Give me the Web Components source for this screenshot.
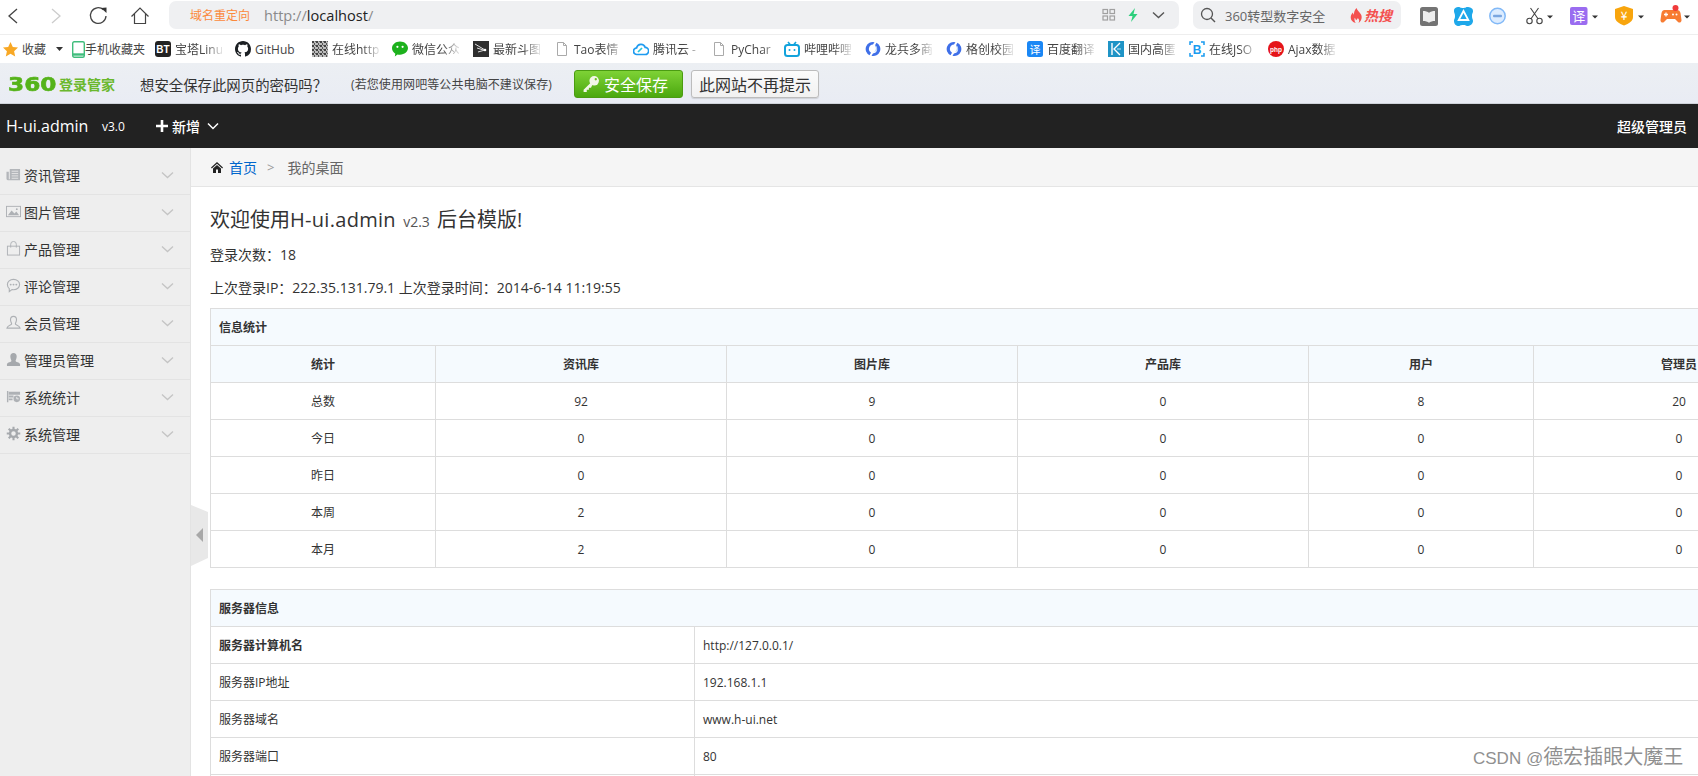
<!DOCTYPE html>
<html lang="zh-CN">
<head>
<meta charset="utf-8">
<title>H-ui.admin</title>
<style>
html,body{margin:0;padding:0;background:#fff;overflow:hidden}
body{font-family:"Open Sans","Noto Sans CJK SC",sans-serif;color:#333;width:1698px;height:776px}
</style>
</head>
<body>
<app-shell>
  <browser-toolbar></browser-toolbar>
  <bookmark-bar>
    <bm-item w="80" label="宝塔Linu"><svg viewBox="0 0 16 16"><rect width="16" height="16" rx="3" fill="#222"/><text x="8" y="12" font-size="10" font-weight="700" fill="#fff" text-anchor="middle" font-family="Liberation Sans">BT</text></svg></bm-item>
    <bm-item w="77" label="GitHub" nofade="1"><svg viewBox="0 0 16 16"><path fill="#1b1f23" d="M8 0C3.58 0 0 3.58 0 8c0 3.54 2.29 6.53 5.47 7.59.4.07.55-.17.55-.38 0-.19-.01-.82-.01-1.49-2.01.37-2.53-.49-2.69-.94-.09-.23-.48-.94-.82-1.13-.28-.15-.68-.52-.01-.53.63-.01 1.08.58 1.23.82.72 1.21 1.87.87 2.33.66.07-.52.28-.87.51-1.07-1.78-.2-3.64-.89-3.64-3.95 0-.87.31-1.59.82-2.15-.08-.2-.36-1.02.08-2.12 0 0 .67-.21 2.2.82.64-.18 1.32-.27 2-.27.68 0 1.36.09 2 .27 1.53-1.04 2.2-.82 2.2-.82.44 1.1.16 1.92.08 2.12.51.56.82 1.27.82 2.15 0 3.07-1.87 3.75-3.65 3.95.29.25.54.73.54 1.48 0 1.07-.01 1.93-.01 2.2 0 .21.15.46.55.38A8.013 8.013 0 0016 8c0-4.42-3.58-8-8-8z"/></svg></bm-item>
    <bm-item w="80" label="在线http"><svg viewBox="0 0 16 16"><defs><pattern id="qrp" width="4" height="4" patternUnits="userSpaceOnUse"><rect width="4" height="4" fill="#bbb"/><rect width="2" height="2" fill="#444"/><rect x="2" y="2" width="1" height="2" fill="#555"/><rect x="3" y="0" width="1" height="1" fill="#666"/></pattern></defs><rect width="16" height="16" fill="url(#qrp)"/></svg></bm-item>
    <bm-item w="81" label="微信公众"><svg viewBox="0 0 16 16"><path fill="#1db11d" d="M8 .5c4.400 0 8 2.900 8 6.600s-3.600 6.600-8 6.600c-.9 0-1.700-.1-2.500-.3L2.800 15.500l.5-2.800C1.300 11.500 0 9.400 0 7.100 0 3.400 3.600.5 8 .5z"/><circle cx="5.400" cy="5.800" r="1.100" fill="#fff"/><circle cx="10.600" cy="5.800" r="1.100" fill="#fff"/></svg></bm-item>
    <bm-item w="81" label="最新斗图"><svg viewBox="0 0 16 16"><rect width="16" height="16" fill="#2f2f2f"/><path d="M2 3l10 6M4 7l8 2.500M5 11l7-2" stroke="#ddd" stroke-width="1" fill="none"/><circle cx="12" cy="9" r="1.300" fill="#fff"/></svg></bm-item>
    <bm-item w="79" label="Tao表情"><svg viewBox="0 0 16 16"><path d="M3.500 1.500h6l3 3v10h-9z M9.500 1.500v3h3" fill="#fff" stroke="#aaa"/></svg></bm-item>
    <bm-item w="78" label="腾讯云 -"><svg viewBox="0 0 16 16"><path d="M4 13.500a3.300 3.300 0 0 1-.4-6.600 4.500 4.500 0 0 1 8.600-.5 3.500 3.500 0 0 1-.2 7.100z" fill="none" stroke="#1e9bf0" stroke-width="1.700"/><path d="M5 11l4-4" stroke="#24c6dc" stroke-width="1.700"/></svg></bm-item>
    <bm-item w="73" label="PyChar"><svg viewBox="0 0 16 16"><path d="M3.500 1.500h6l3 3v10h-9z M9.500 1.500v3h3" fill="#fff" stroke="#aaa"/></svg></bm-item>
    <bm-item w="81" label="哔哩哔哩"><svg viewBox="0 0 16 16"><rect x="1" y="4" width="14" height="11" rx="2.500" fill="#fff" stroke="#12a3dc" stroke-width="2"/><path d="M4 1l2.500 3M12 1L9.500 4" stroke="#12a3dc" stroke-width="1.600"/><circle cx="5.500" cy="9" r="1" fill="#12a3dc"/><circle cx="10.500" cy="9" r="1" fill="#12a3dc"/></svg></bm-item>
    <bm-item w="81" label="龙兵多商"><svg viewBox="0 0 16 16"><path d="M9.500 1.200A7 7 0 0 0 4.500 14.200L6 11.800A4.500 4.500 0 0 1 8 3.500z" fill="#3f6fe8"/><path d="M6.500 14.800A7 7 0 0 0 11.500 1.800L10 4.200A4.500 4.500 0 0 1 8 12.500z" fill="#3f6fe8"/><path d="M10.500 5a3.800 3.800 0 0 1-.5 5.500" fill="none" stroke="#9cc4f7"/></svg></bm-item>
    <bm-item w="81" label="格创校园"><svg viewBox="0 0 16 16"><path d="M9.500 1.200A7 7 0 0 0 4.500 14.200L6 11.800A4.500 4.500 0 0 1 8 3.500z" fill="#3f6fe8"/><path d="M6.500 14.800A7 7 0 0 0 11.500 1.800L10 4.200A4.500 4.500 0 0 1 8 12.500z" fill="#3f6fe8"/><path d="M10.500 5a3.800 3.800 0 0 1-.5 5.500" fill="none" stroke="#9cc4f7"/></svg></bm-item>
    <bm-item w="81" label="百度翻译"><svg viewBox="0 0 16 16"><rect width="16" height="16" rx="2.500" fill="#1a87f5"/><text x="8" y="12.500" font-size="11" fill="#fff" text-anchor="middle" font-family="Noto Sans CJK SC">译</text></svg></bm-item>
    <bm-item w="81" label="国内高匿"><svg viewBox="0 0 16 16"><rect width="16" height="16" fill="#1f94c6"/><path d="M4 2v12M12 2L6 8l6 6" fill="none" stroke="#fff" stroke-width="1.400"/><path d="M9 8h4" stroke="#bfe6f5" stroke-width="1"/></svg></bm-item>
    <bm-item w="79" label="在线JSO"><svg viewBox="0 0 16 16"><path d="M1 4V1h3M12 1h3v3M15 12v3h-3M4 15H1v-3" fill="none" stroke="#1a9cf0" stroke-width="1.500"/><text x="8" y="12.500" font-size="12" font-weight="700" fill="#1a9cf0" text-anchor="middle" font-family="Liberation Sans">B</text></svg></bm-item>
    <bm-item w="90" label="Ajax数据"><svg viewBox="0 0 16 16"><circle cx="8" cy="8" r="8" fill="#e5141a"/><text x="8" y="10.500" font-size="6.500" font-weight="700" fill="#fff" text-anchor="middle" font-family="Liberation Sans">php</text></svg></bm-item>
  </bookmark-bar>
  <password-bar></password-bar>
  <app-header></app-header>
  <app-body>
    <side-menu slot="side">
      <menu-row label="资讯管理"><svg viewBox="0 0 16 16"><path fill="#b3b6ba" d="M4 2h11v12H2a1.500 1.500 0 0 1-1.500-1.500V5H3v8h1z"/><path d="M6 4.500h7M6 7h7M6 9.500h7M6 12h7" stroke="#e6e6e6"/></svg></menu-row>
      <menu-row label="图片管理"><svg viewBox="0 0 16 16"><rect x=".5" y="2.500" width="15" height="11" fill="#eee" stroke="#aeb1b5"/><path fill="#aeb1b5" d="M2 12l4-5 3 3 2-2 3 4z"/><circle cx="11.500" cy="5.500" r="1" fill="#aeb1b5"/></svg></menu-row>
      <menu-row label="产品管理"><svg viewBox="0 0 16 16"><rect x="1.500" y="5.500" width="13" height="9.500" fill="none" stroke="#aeb1b5"/><path d="M5 7V3.500a3 3 0 0 1 6 0V7" fill="none" stroke="#aeb1b5"/></svg></menu-row>
      <menu-row label="评论管理"><svg viewBox="0 0 16 16"><path d="M8 1.500c3.700 0 6.500 2.400 6.500 5.500S11.700 12.500 8 12.500c-.6 0-1.200 0-1.700-.2L3.500 14.500V11.300C2.200 10.300 1.500 8.800 1.500 7 1.500 3.900 4.300 1.500 8 1.500z" fill="none" stroke="#aeb1b5" stroke-width="1.200"/><circle cx="5" cy="7" r="1" fill="#aeb1b5"/><circle cx="8" cy="7" r="1" fill="#aeb1b5"/><circle cx="11" cy="7" r="1" fill="#aeb1b5"/></svg></menu-row>
      <menu-row label="会员管理"><svg viewBox="0 0 16 16"><path d="M8 1.500c2 0 3.200 1.500 3.200 3.500S10 8.500 10 9.500s4.500 1.500 5 4.500H1c.5-3 5-3.500 5-4.500S4.800 7 4.800 5 6 1.500 8 1.500z" fill="none" stroke="#aeb1b5" stroke-width="1.200"/></svg></menu-row>
      <menu-row label="管理员管理"><svg viewBox="0 0 16 16"><path fill="#a6a9ad" d="M8 1c2.200 0 3.400 1.600 3.400 3.700S10.200 8.600 10.200 9.600s4.300 1.400 4.800 3.400v2H1v-2c.5-2 4.800-2.400 4.800-3.400S4.600 6.800 4.600 4.700 5.800 1 8 1z"/></svg></menu-row>
      <menu-row label="系统统计"><svg viewBox="0 0 16 16"><path fill="#aeb1b5" d="M1 2h1.500v12H1zM3 3h12v3H3zM3 7h5v2H3zM3 10h4v2H3z"/><circle cx="11.500" cy="10.500" r="3.500" fill="#aeb1b5"/><path d="M11.500 8.500v2h2" stroke="#eee" fill="none"/></svg></menu-row>
      <menu-row label="系统管理"><svg viewBox="0 0 16 16"><circle cx="8" cy="8" r="3.700" fill="none" stroke="#a6a9ad" stroke-width="2.600"/><path d="M8 .8v3M8 12.200v3M.8 8h3M12.200 8h3M2.900 2.900l2.200 2.200M10.900 10.900l2.200 2.200M13.100 2.900l-2.200 2.200M5.100 10.900l-2.200 2.200" stroke="#a6a9ad" stroke-width="2.200"/></svg></menu-row>
    </side-menu>
    <main-area slot="main">
      <crumb-bar></crumb-bar>
      <welcome-block></welcome-block>
      <stats-table></stats-table>
      <server-table></server-table>
    </main-area>
  </app-body>
  <side-toggle></side-toggle>
  <water-mark></water-mark>
</app-shell>
<script>
function def(name, css, html){
  customElements.define(name, class extends HTMLElement{
    connectedCallback(){
      if(this.shadowRoot) return;
      const r=this.attachShadow({mode:"open"});
      const h=typeof html==="function"?html(this):html;
      r.innerHTML="<style>"+css+"</style>"+h;
    }
  });
}
def("app-shell",":host{display:block;position:relative;width:1698px;height:776px;overflow:hidden}","<slot></slot>");

const chev=(c,w)=>`<svg width="${w+2}" height="9" viewBox="0 0 ${w+2} 9"><path d="M1 1.500l${w/2} ${w/2-0.500}l${w/2} -${w/2-0.500}" fill="none" stroke="${c}" stroke-width="1.300"/></svg>`;

def("browser-toolbar",`
:host{display:flex;align-items:flex-start;height:34px;background:#fff;border-bottom:1px solid #eeeeee;box-sizing:content-box}
svg{display:block;flex:none}
.addr{margin-top:1px;width:1010px;height:28px;background:#eff0f2;border-radius:7px;display:flex;align-items:center;padding-left:21px;box-sizing:border-box;flex:none}
.tag{font-size:12px;color:#fb8a3c;width:74px;flex:none}
.url{font-size:14.600px;color:#222;flex:1;font-family:"Open Sans",sans-serif}
.url i{font-style:normal;color:#8a8a8a}
.search{margin:1px 0 0 14px;width:208px;height:28px;background:#eff0f2;border-radius:7px;display:flex;align-items:center;padding-left:7px;box-sizing:border-box;flex:none}
.q{font-size:13px;color:#666;margin-left:9px;width:125px;flex:none;white-space:nowrap}
.hot{font-size:14px;font-weight:700;font-style:italic;color:#f4504f;margin-left:1px}
`,`
<svg width="169" height="34" viewBox="0 0 169 34">
  <path d="M17 9l-8 7 8 7" fill="none" stroke="#444" stroke-width="1.300"/>
  <path d="M52 9l8 7-8 7" fill="none" stroke="#ccc" stroke-width="1.300"/>
  <path d="M103.500 9.800A7.800 7.800 0 1 0 106 16" fill="none" stroke="#444" stroke-width="1.300"/>
  <path d="M101 8l5.500-.5v5.500z" fill="#333"/>
  <path d="M131.500 16.500L140 8l8.500 8.500M134.500 14v9.500h11V14" fill="none" stroke="#444" stroke-width="1.200"/>
</svg>
<div class="addr">
  <span class="tag">域名重定向</span>
  <span class="url"><i>http://</i>localhost<i>/</i></span>
  <svg width="69" height="28" viewBox="0 0 69 28" style="margin-right:8px">
    <g fill="none" stroke="#a0a0a0" stroke-width="1.200"><rect x="1" y="8.500" width="4.500" height="4"/><rect x="8" y="8.500" width="4.500" height="4"/><rect x="1" y="15" width="4.500" height="4"/><rect x="8" y="15" width="4.500" height="4"/></g>
    <path d="M33 7l-6.500 8h4l-1.500 6 6.500-8h-4z" fill="#2dcf7c"/>
    <path d="M51 11.500l5.500 5 5.500-5" fill="none" stroke="#555" stroke-width="1.400"/>
  </svg>
</div>
<div class="search">
  <svg width="16" height="16" viewBox="0 0 16 16"><circle cx="7" cy="7" r="5.500" fill="none" stroke="#555" stroke-width="1.300"/><path d="M11 11l4 4" stroke="#555" stroke-width="1.400"/></svg>
  <span class="q">360转型数字安全</span>
  <svg width="13" height="15" viewBox="0 0 13 15"><path fill="#f4504f" d="M6.500 0c.8 2.800 3 4 4.500 6.500 1.500 2.800.5 6.500-2.500 8.500 1-1.500 1-3.500-.7-5-.3 1.200-1 1.700-1.800 2.300-.3-1.200-.8-2-1.300-2.500-.5 1.500-.2 3.500 1 5.200C2 14 0 11 1 7.500c.4-1.300 1.200-2.300 2-3 0 1 .3 1.700.9 2.200C3.900 4.300 4.700 1.800 6.500 0z"/></svg>
  <span class="hot">热搜</span>
</div>
<svg width="297" height="34" viewBox="1401 0 297 34">
  <rect x="1420" y="7" width="18" height="19" rx="2.500" fill="#747474"/>
  <path d="M1423 11c2.500 0 4.500.5 6 1.800 1.500-1.300 3.500-1.800 6-1.800v10c-2.500 0-4.500.5-6 1.800-1.500-1.300-3.500-1.800-6-1.800z" fill="#eee"/>
  <path d="M1454 11c0-3 2-4 5-4 1 0 1 1 4 1s3-1 4-1c3 0 6 1 6 4 0 2-1 2-1 5s1 3 1 5c0 3-3 5-6 5-1 0-1-1-4-1s-3 1-4 1c-3 0-5-2-5-5 0-2 1-2 1-5s-1-3-1-5z" fill="#1ea8ea"/>
  <path d="M1463.500 11l-4.800 9h9.600z" fill="none" stroke="#fff" stroke-width="1.800"/>
  <circle cx="1497.500" cy="16" r="7.700" fill="#dcecff" stroke="#82b9f7" stroke-width="1.500"/>
  <rect x="1493" y="14.800" width="9" height="2.400" rx="1" fill="#7aa6e0"/>
  <g fill="none" stroke="#444" stroke-width="1.100"><circle cx="1529.500" cy="21" r="2.700"/><circle cx="1539.500" cy="21" r="2.700"/><path d="M1531 18.800L1538.500 8M1538 18.800L1530.500 8"/></g>
  <path d="M1547 15.500h6l-3 3z" fill="#333"/>
  <rect x="1570" y="7" width="17.500" height="18" rx="2" fill="#9a6cf0"/>
  <text x="1578.800" y="21" font-size="13" fill="#fff" text-anchor="middle" font-family="Noto Sans CJK SC">译</text>
  <path d="M1592 15.500h6l-3 3z" fill="#333"/>
  <path d="M1615 9l9-3 9 3v8c0 4-4 6.500-9 8.500-5-2-9-4.500-9-8.500z" fill="#f8a50d"/>
  <text x="1624" y="20" font-size="12" fill="#fff" text-anchor="middle" font-family="Noto Sans CJK SC">¥</text>
  <path d="M1638 15.500h6l-3 3z" fill="#333"/>
  <path d="M1664 10h13c2 0 3 1 3.500 3l1 7c.3 2-2 3.500-3.500 2l-3-3h-8l-3 3c-1.500 1.500-3.800 0-3.500-2l1-7c.5-2 1.500-3 3-3z" fill="#f77c32"/>
  <path d="M1664 14.500h4M1666 12.500v4" stroke="#fff" stroke-width="1.300"/><circle cx="1673" cy="14.500" r="1" fill="#fff"/><circle cx="1676.500" cy="14.500" r="1" fill="#fff"/>
  <circle cx="1675.500" cy="8" r="3" fill="#f03a3a"/>
  <path d="M1684 15.500h6l-3 3z" fill="#333"/>
</svg>`);

def("bookmark-bar",`
:host{display:flex;align-items:center;height:28px;background:#fff;font-size:12px;color:#444;white-space:nowrap}
.star{margin-left:3px;flex:none;display:block}
.fav{margin-left:4px;width:26px;flex:none}
.caret{margin-left:8px;flex:none;display:block}
.ph{margin-left:8px;flex:none;display:block}
.mob{width:70px;flex:none}
`,`
<svg class="star" width="15" height="15" viewBox="0 0 15 15"><path fill="#f8a825" d="M7.500 0l2.300 5 5.200.600-3.900 3.600 1.100 5.300-4.700-2.700L2.800 14.500l1.100-5.300L0 5.600 5.200 5z"/></svg>
<span class="fav">收藏</span>
<svg class="caret" width="8" height="5" viewBox="0 0 8 5"><path d="M0 0h7L3.500 4z" fill="#333"/></svg>
<svg class="ph" width="13" height="17" viewBox="0 0 13 17"><rect x=".7" y=".7" width="11.600" height="15.600" rx="1.500" fill="#fff" stroke="#41bd7d" stroke-width="1.400"/><path d="M1 13.500h11" stroke="#41bd7d" stroke-width="2.400"/></svg>
<span class="mob">手机收藏夹</span>
<slot></slot>`);

def("bm-item",`
:host{display:flex;align-items:center;flex:none;height:28px;white-space:nowrap}
.i{width:16px;height:16px;flex:none;display:block}
::slotted(svg){width:16px;height:16px;display:block}
.t{display:block;overflow:hidden;width:47px;margin-left:4px}
.f{-webkit-mask-image:linear-gradient(to right,#000 65%,rgba(0,0,0,.15));mask-image:linear-gradient(to right,#000 65%,rgba(0,0,0,.15))}
`,h=>{
  h.style.width=h.getAttribute("w")+"px";
  const f=h.getAttribute("nofade")?"":"f";
  return `<span class="i"><slot></slot></span><span class="t ${f}">${h.getAttribute("label")}</span>`;
});

def("password-bar",`
:host{display:flex;align-items:center;height:41px;padding-top:2px;background:linear-gradient(#eceff3,#e9ecf4);border-bottom:1px solid #cfd3da;box-sizing:border-box;white-space:nowrap}
.n{font-family:"DejaVu Sans",sans-serif;font-weight:700;font-size:19px;color:#55b31a;-webkit-text-stroke:.6px #55b31a;width:50px;margin-left:8px;display:inline-block;transform:scaleX(1.220);transform-origin:left center;flex:none;line-height:18px}
.g{font-size:14px;font-weight:700;color:#6ab82d;width:81px;flex:none;margin-left:1px}
.a{font-size:14.400px;color:#333;width:210px;flex:none}
.b{font-size:12px;letter-spacing:.1px;color:#444;width:223px;flex:none;margin-left:1px}
button{font:16px "Open Sans","Noto Sans CJK SC",sans-serif;height:28px;padding:0;border-radius:3px;display:flex;align-items:center;box-sizing:border-box;flex:none}
.s{width:109px;background:linear-gradient(#7ed236,#4ba80f);border:1px solid #4b9c12;color:#fff;gap:4px;padding-left:7px}
.o{width:128px;justify-content:center;background:linear-gradient(#fbfbfb,#f1f1f1);border:1px solid #bcbcbc;color:#333;margin-left:8px;box-shadow:0 1px 1px rgba(0,0,0,.12)}
`,`
<span class="n">360</span><span class="g">登录管家</span>
<span class="a">想安全保存此网页的密码吗&#xFF1F;</span>
<span class="b">(若您使用网吧等公共电脑不建议保存)</span>
<button class="s"><svg width="18" height="18" viewBox="0 0 17 17"><circle cx="11.500" cy="5.500" r="4.500" fill="#f2f7e8"/><circle cx="13" cy="4" r="1.100" fill="#6dbd26"/><path d="M8.500 7L1.500 14v2h3v-2h2v-2h2l1-2z" fill="#f2f7e8"/></svg>安全保存</button>
<button class="o">此网站不再提示</button>`);

def("app-header",`
:host{display:flex;align-items:center;height:44px;background:#222;color:#fff;white-space:nowrap}
.l{font-size:16px;margin-left:6px;width:96px;flex:none}
.v{font-size:12px;width:54px;flex:none}
.p{flex:none;display:block;margin-right:4px}
.x{font-size:14px;font-weight:500;margin-right:7px;flex:none}
svg{display:block}
.sp{flex:1}
.u{font-size:14px;font-weight:500;width:81px;flex:none}
`,`
<span class="l">H-ui.admin</span><span class="v">v3.0</span>
<svg class="p" width="12" height="12" viewBox="0 0 12 12"><path d="M6 0v12M0 6h12" stroke="#fff" stroke-width="2.600"/></svg>
<span class="x">新增</span>
<svg width="12" height="8" viewBox="0 0 12 8"><path d="M1 1.500l5 5 5-5" fill="none" stroke="#fff" stroke-width="1.500"/></svg>
<span class="sp"></span><span class="u">超级管理员</span>`);

def("app-body",`
:host{display:flex;height:628px;overflow:hidden}
.s{width:191px;flex:none;display:block}
.m{flex:1;min-width:0;overflow:hidden}
`,`<div class="s"><slot name="side"></slot></div><div class="m"><slot name="main"></slot></div>`);

def("side-menu",`
:host{display:block;height:628px;background:#eee;border-right:1px solid #e3e3e3;box-sizing:border-box;padding-top:10px}
`,`<slot></slot>`);

def("menu-row",`
:host{display:flex;align-items:center;height:37px;box-sizing:border-box;border-bottom:1px solid #e3e3e3;padding-bottom:3px;font-size:14px;color:#333;padding-left:6px}
.i{width:15px;height:15px;flex:none;margin-right:3px}
::slotted(svg){width:15px;height:15px;display:block}
.t{flex:1}
.c{flex:none;margin-right:16px;display:block}
`,h=>`<span class="i"><slot></slot></span><span class="t">${h.getAttribute("label")}</span><span class="c">${chev("#c4c4c4",11)}</span>`);

def("main-area",`:host{display:block;width:1507px}`,`<slot></slot>`);

def("crumb-bar",`
:host{display:flex;align-items:center;height:39px;box-sizing:border-box;background:#f5f5f5;border-bottom:1px solid #e5e5e5;padding-left:20px;font-size:14px;color:#666;white-space:nowrap}
a{color:#06c;text-decoration:none;margin-left:6px}
.s{color:#999;margin:0 13px 0 10px;font-size:13px}
svg{display:block}
`,`
<svg width="12" height="11" viewBox="0 0 12 11"><path d="M6 0L0 5.500l.8.900L6 1.800l5.200 4.600.8-.9z M2 6.500L6 3l4 3.500V11H7V7.500H5V11H2z" fill="#222"/></svg>
<a>首页</a><span class="s">&gt;</span><span>我的桌面</span>`);

def("welcome-block",`
:host{display:block;padding:0 19px;height:121px;box-sizing:border-box;overflow:hidden;white-space:nowrap}
h1{font-size:20px;font-weight:400;margin:18px 0 0;line-height:30px;color:#333;word-spacing:2px}
h1 b{font-weight:400;letter-spacing:.3px}
small{font-size:14px;color:#555}
p{font-size:14px;margin:0;line-height:20px;color:#333}
.a{margin-top:8px}
.b{margin-top:13px}
`,`
<h1>欢迎使用<b>H-ui.admin</b> <small>v2.3</small> 后台模版!</h1>
<p class="a">登录次数&#xFF1A;18</p>
<p class="b">上次登录IP&#xFF1A;222.35.131.79.1 上次登录时间&#xFF1A;2014-6-14 11:19:55</p>`);

const tableCss=`
:host{display:block;padding-left:19px}
table{border-collapse:collapse;table-layout:fixed;width:1614px;font-size:12px;color:#333;white-space:nowrap}
td,th{height:37px;box-sizing:border-box;border:1px solid #ddd;padding:0 8px;font-weight:400}
th.cap{text-align:left;background:#f5fafe;font-weight:700}
tr.h td{background:#f5fafe;font-weight:700}
tr.c td{text-align:center}
.bold{font-weight:700}
`;
def("stats-table",tableCss,()=>{
  const rows=[["总数","92","9","0","8","20"],["今日","0","0","0","0","0"],["昨日","0","0","0","0","0"],["本周","2","0","0","0","0"],["本月","2","0","0","0","0"]];
  return `<table><colgroup><col style="width:225px"><col style="width:291px"><col style="width:291px"><col style="width:291px"><col style="width:225px"><col style="width:291px"></colgroup>
  <thead><tr><th class="cap" colspan="6">信息统计</th></tr>
  <tr class="h c"><td>统计</td><td>资讯库</td><td>图片库</td><td>产品库</td><td>用户</td><td>管理员</td></tr></thead>
  <tbody>${rows.map(r=>`<tr class="c">${r.map(x=>`<td>${x}</td>`).join("")}</tr>`).join("")}</tbody></table>`;
});
def("server-table",tableCss+":host{margin-top:21px}",()=>{
  const rows=[["服务器计算机名","http://127.0.0.1/",1],["服务器IP地址","192.168.1.1"],["服务器域名","www.h-ui.net"],["服务器端口","80"],["",""]];
  return `<table><colgroup><col style="width:484px"><col></colgroup>
  <thead><tr><th class="cap" colspan="2">服务器信息</th></tr></thead>
  <tbody>${rows.map(r=>`<tr><td class="${r[2]?"bold":""}">${r[0]}</td><td>${r[1]}</td></tr>`).join("")}</tbody></table>`;
});

def("side-toggle",`
:host{position:absolute;left:191px;top:505px;width:17px;height:61px;display:block}
svg{display:block}
`,`<svg width="17" height="61" viewBox="0 0 17 61"><path d="M0 0l17 7v46L0 61z" fill="#e8e8e8"/><path d="M12 23v14l-7-7z" fill="#a8a8a8"/></svg>`);

def("water-mark",`
:host{position:absolute;left:1473px;top:743px;display:block;font-size:20px;line-height:28px;color:#909090;white-space:nowrap;font-family:"Liberation Sans","Noto Sans CJK SC",sans-serif}
.l{font-size:17px}
`,`<span class="l">CSDN @</span>德宏插眼大魔王`);
</script>
</body>
</html>
